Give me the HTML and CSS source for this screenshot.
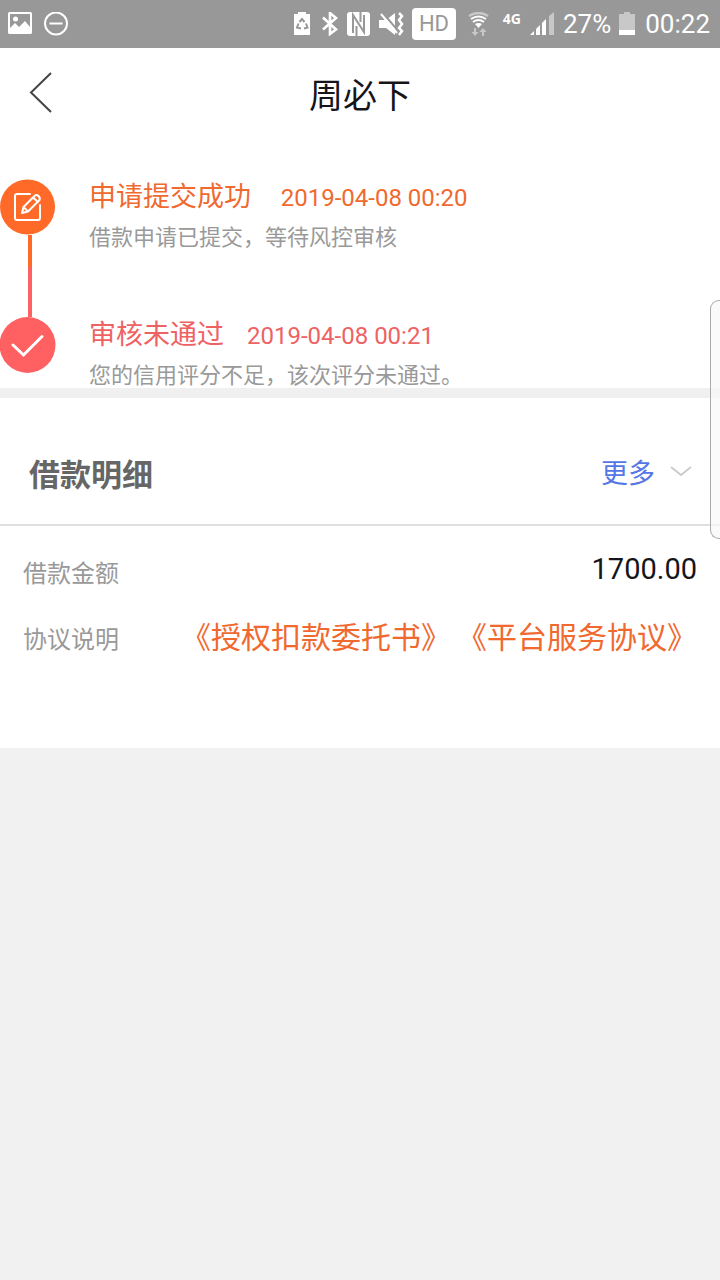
FILE: index.html
```html
<!DOCTYPE html>
<html lang="zh-CN">
<head>
    <meta charset="UTF-8">
    <title>周必下</title>
    <meta name="viewport" content="width=device-width, initial-scale=1">
    <link rel="stylesheet" href="styles.css">
</head>
<body>
    <div class="status-bar">
        <div class="status-left">
            <svg width="24" height="24" viewBox="0 0 24 24">
                <path fill="#fff" fill-rule="evenodd" d="M1.500 0h21a1.500 1.500 0 0 1 1.500 1.500v19a1.500 1.500 0 0 1-1.500 1.500h-21a1.500 1.500 0 0 1-1.500-1.500v-19A1.500 1.500 0 0 1 1.500 0zM2 2v14l5-5 4 4 6-6 5 6V2z"/>
                <circle cx="7.500" cy="7" r="2.500" fill="#fff"/>
            </svg>
            <svg width="24" height="24" viewBox="0 0 24 24" fill="none" stroke="#fff" stroke-width="2">
                <circle cx="12" cy="11.500" r="11"/>
                <path d="M5.500 11.500h13"/>
            </svg>
        </div>
        <div class="status-right">
            <!-- battery saver -->
            <svg width="18" height="24" viewBox="0 0 18 24">
                <path fill="#fff" d="M4 0h8v2h4v21H0V2h4z"/>
                <path fill="none" stroke="#989898" stroke-width="2" d="M5.500 10l2.500-3 2.500 3M12 11.500l1.500 4-3.500 1M4.500 11.500l-1.500 4 4 1"/>
            </svg>
            <!-- bluetooth -->
            <svg width="18" height="24" viewBox="0 0 18 24">
                <path fill="none" stroke="#fff" stroke-width="2.600" d="M3 5.500l13 12L10 22V1l6 5L3 17.500"/>
            </svg>
            <!-- nfc -->
            <svg width="24" height="24" viewBox="0 0 24 24">
                <rect x="1" width="23" height="24" rx="3" fill="#fff"/>
                <path fill="none" stroke="#989898" stroke-width="2" d="M7 21V3l11 17V3M10.500 14v10M14.500 0v10"/>
            </svg>
            <!-- muted -->
            <svg width="26" height="24" viewBox="0 0 26 24">
                <path fill="#fff" d="M1 8h7l9-7v22l-9-7H1z"/>
                <path stroke="#989898" stroke-width="2" d="M5 1l15 18"/>
                <path stroke="#fff" stroke-width="2" d="M3 2l16 19"/>
                <path fill="none" stroke="#fff" stroke-width="2.500" d="M21 1l3 3-3 4 3 4-3 4 3 3-3 4"/>
            </svg>
            <span class="hd">HD</span>
            <!-- wifi -->
            <svg width="25" height="24" viewBox="0 0 25 24" fill="none" stroke="#fff" stroke-width="2">
                <path stroke="#c8c8c8" stroke-width="2.500" d="M5 4q9.500-6 19 0"/>
                <path d="M7 7q7.500-5 15 0M9 10q5.500-4 11 0"/>
                <path fill="#fff" stroke="none" d="M11 12q3.500-2 7 0l-3.500 4z"/>
                <path fill="#c8c8c8" stroke="none" d="M10 16h2v4h2.500L11 24l-3.500-4H10zM18 24h2v-4h2.500L19 16l-3.500 4H18z"/>
            </svg>
            <span class="net">4G</span>
            <!-- signal -->
            <svg width="26" height="24" viewBox="0 0 26 24">
                <path fill="#fff" d="M1 23l4-4v4zM7 17l4-4v10H7zM13 11l4-4v16h-4z"/>
                <path fill="#c8c8c8" d="M20 4l5-4v23h-5z"/>
            </svg>
            <span>27%</span>
            <svg width="18" height="24" viewBox="0 0 18 24">
                <path fill="#c8c8c8" d="M5 0h6v2h5v16H0V2h5z"/>
                <path fill="#fff" d="M0 18h16v5H0z"/>
            </svg>
            <span>00:22</span>
        </div>
    </div>

    <header class="nav">
        <button class="back" type="button" aria-label="返回">
            <svg width="24" height="42" viewBox="0 0 24 42" fill="none" stroke="#444" stroke-width="2">
                <path d="M22 1L2 20.500 22 40"/>
            </svg>
        </button>
        <h1>周必下</h1>
    </header>

    <ol class="steps">
        <li class="step submitted">
            <div class="step-mark">
                <svg width="56" height="56" viewBox="0 0 56 56" fill="none" stroke="#fff" stroke-width="2" stroke-linecap="round">
                    <circle cx="27.500" cy="28" r="27.500" fill="#ff6a28" stroke="none"/>
                    <path d="M30 15H17q-2 0-2 2v22q0 2 2 2h21q2 0 2-2V26"/>
                    <path stroke-linejoin="round" d="M22 34l1.500-6L34.500 17q2-2 4 0t1 4L28 32.500zM33 18.500l5 4.500M23.500 28l4.500 4.500"/>
                </svg>
                <i class="step-line"></i>
            </div>
            <div class="step-text">
                <div class="step-head"><h2>申请提交成功&nbsp;</h2><time>2019-04-08 00:20</time></div>
                <p>借款申请已提交，等待风控审核</p>
            </div>
        </li>
        <li class="step rejected">
            <div class="step-mark">
                <svg width="56" height="56" viewBox="0 0 56 56">
                    <circle cx="27.500" cy="28" r="28" fill="#ff6062"/>
                    <path fill="none" stroke="#fff" stroke-width="3" stroke-linecap="round" d="M13 28l10.500 10L42 19.500"/>
                </svg>
            </div>
            <div class="step-text">
                <div class="step-head"><h2>审核未通过</h2><time>2019-04-08 00:21</time></div>
                <p>您的信用评分不足，该次评分未通过。</p>
            </div>
        </li>
    </ol>

    <section class="detail">
        <div class="detail-head">
            <h2>借款明细</h2>
            <button class="more" type="button">更多
                <svg width="22" height="12" viewBox="0 0 22 12" fill="none" stroke="#ccc" stroke-width="2">
                    <path d="M1 2l10 8L21 2"/>
                </svg>
            </button>
        </div>
        <dl>
            <div class="row">
                <dt>借款金额</dt>
                <dd>1700.00</dd>
            </div>
            <div class="row">
                <dt>协议说明</dt>
                <dd class="links"><a href="#">《授权扣款委托书》</a><a href="#">《平台服务协议》</a></dd>
            </div>
        </dl>
    </section>

    <div class="edge-handle"></div>
</body>
</html>
```

FILE: styles.css
```css
body {
    font-family: Roboto, "Noto Sans CJK SC", sans-serif;
    background: #f1f1f1;
    margin: 0;
    text-spacing-trim: space-all;
}
h1, h2, p, ol, dl, dd {
    margin: 0;
    padding: 0;
    font-weight: normal;
}
button {
    border: none;
    background: none;
    padding: 0;
    font-family: inherit;
    cursor: pointer;
}
svg {
    display: block;
    flex: none;
}

/* status bar */
.status-bar {
    display: flex;
    justify-content: space-between;
    height: 48px;
    padding: 0 10px 0 8px;
    background: #989898;
    color: #fff;
    font-size: 26px;
}
.status-left, .status-right {
    display: flex;
    align-items: center;
    gap: 8px;
}
.status-left {
    gap: 12px;
}
.hd {
    width: 44px;
    line-height: 32px;
    border-radius: 4px;
    background: #fff;
    color: #989898;
    font-size: 22px;
    text-align: center;
}
.net {
    width: 24px;
    font: bold 14px "Open Sans", sans-serif;
    text-align: right;
    padding-bottom: 12px;
}

/* title */
.nav {
    display: grid;
    grid-template-columns: 80px 1fr 80px;
    align-items: center;
    height: 90px;
    background: #fff;
}
.back {
    justify-self: start;
    padding-left: 29px;
}
.nav h1 {
    font-size: 34px;
    text-align: center;
    color: #15151a;
}

/* progress */
.steps {
    list-style: none;
    padding-top: 41px;
    background: #fff;
    border-bottom: 10px solid #f0f0f0;
}
.step {
    display: flex;
    gap: 33px;
}
.submitted {
    min-height: 138px;
    color: #f0692f;
}
.rejected {
    height: 71px;
    color: #ee6264;
}
.step-mark {
    display: flex;
    flex-direction: column;
}
.step-line {
    flex: 1;
    width: 4px;
    margin-left: 28px;
    background: linear-gradient(#ff6a28 38%, #ff6062 40%);
}
.step-head {
    display: flex;
    align-items: baseline;
    gap: 23px;
    line-height: 36px;
}
.step h2 {
    font-size: 27px;
}
.step time {
    font-size: 24px;
}
.step p {
    margin-top: 9px;
    font-size: 22px;
    line-height: 26px;
    color: #999;
}

/* loan detail */
.detail {
    background: #fff;
    padding-bottom: 80px;
}
.detail-head {
    display: flex;
    justify-content: space-between;
    align-items: center;
    height: 126px;
    padding: 0 28px 0 29px;
    border-bottom: 2px solid #e0e0e0;
}
.detail-head h2 {
    padding-top: 22px;
    font-size: 31px;
    font-weight: bold;
    color: #666;
}
.more {
    display: flex;
    align-items: center;
    gap: 15px;
    padding-top: 20px;
    font-size: 27px;
    color: #5577e6;
}
dl {
    padding-top: 10px;
}
.row {
    display: flex;
    justify-content: space-between;
    align-items: center;
    height: 66px;
    padding: 0 23px;
}
dt {
    padding-top: 4px;
    font-size: 24px;
    color: #999;
}
dd {
    font-size: 29px;
    color: #15151a;
}
.links {
    display: flex;
    gap: 6px;
    font-size: 30px;
}
.links a {
    color: #f0692f;
    text-decoration: none;
}

/* system side panel grip */
.edge-handle {
    position: absolute;
    top: 300px;
    right: 0;
    width: 9px;
    height: 237px;
    border: 1px solid #aaa;
    border-right: none;
    border-radius: 9px 0 0 9px;
    background: rgba(248, 248, 248, .7);
}
```
